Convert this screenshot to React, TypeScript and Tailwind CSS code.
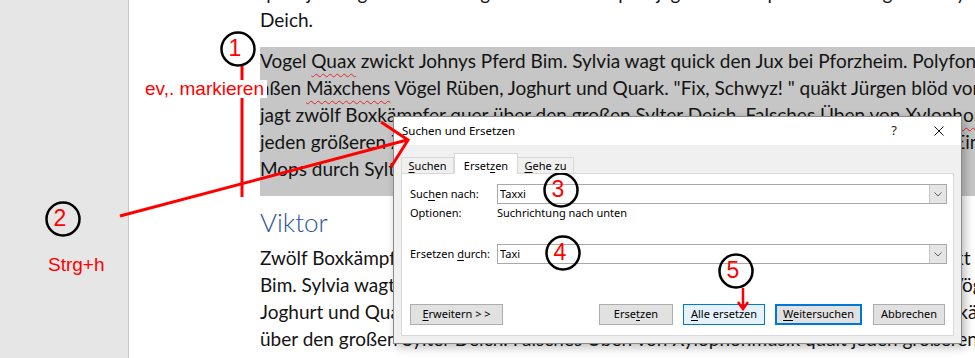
import React from 'react';

// Red spell-check squiggle under a word
function Sq({ children }: { children: React.ReactNode }) {
  return (
    <span className="underline decoration-wavy decoration-[#e3252b] decoration-1 underline-offset-[5px]">
      {children}
    </span>
  );
}

// Access key underline inside dialog labels
function K({ children }: { children: React.ReactNode }) {
  return <u className="underline-offset-[2px]">{children}</u>;
}

function Document() {
  return (
    <div className="flex-1 min-w-0 pl-[131px] -mt-[21px] font-['Lato','Open_Sans',sans-serif] text-[19px] leading-[27px] text-[#141414] whitespace-nowrap">
      <div>quält jeden größeren Zwerg. Zwölf Boxkämpfer jagen Viktor quer über den großen Sylter</div>
      <div>Deich.</div>

      {/* selected paragraph */}
      <div className="mt-[14px] bg-[#c6c6c6] pb-[14px]">
        <div>
          Vogel <Sq>Quax</Sq> zwickt Johnys Pferd Bim. Sylvia wagt quick den Jux bei Pforzheim. Polyfon zwitschernd
        </div>
        <div>
          aßen <Sq>Mäxchens</Sq> Vögel Rüben, Joghurt und Quark. "Fix, Schwyz! " quäkt Jürgen blöd vom Paß. Victor
        </div>
        <div>
          jagt zwölf Boxkämpfer quer über den großen Sylter Deich. Falsches Üben von <Sq>Xylophonmusik</Sq> quält
        </div>
        <div>jeden größeren Zwerg. Zwölf Boxkämpfer jagen quer über den großen Sylter Deich. Ein geübter</div>
        <div>Mops durch Sylt.</div>
      </div>

      <div className="mt-[10px] text-[26px] leading-[32px] text-[#2f5496] font-light">Viktor</div>

      <div className="mt-[6px]">
        <div>Zwölf Boxkämpfer jagen Viktor quer über den großen Sylter Deich. Vogel Quax zwickt Johnys Pferd</div>
        <div>Bim. Sylvia wagt quick den Jux bei Pforzheim. Polyfon zwitschernd aßen Mäxchens Vögel Rüben,</div>
        <div>Joghurt und Quark. "Fix, Schwyz! " quäkt Jürgen blöd vom Paß. Victor jagt zwölf Boxkämpfer quer</div>
        <div>über den großen Sylter Deich. Falsches Üben von Xylophonmusik quält jeden größeren Zwerg.</div>
        <div>
          Zwölf Boxkämpfer jagen Viktor quer über den <Sq>Sylterdeichweg</Sq> . Vogel Quax zwickt Johnys Pferd
        </div>
      </div>
    </div>
  );
}

function Combo({ value }: { value: string }) {
  return (
    <div className="flex-1 h-[20px] border border-[#a8a8a8] bg-white flex items-stretch">
      <span className="flex-1 pl-[2px] leading-[18px]">{value}</span>
      <div className="w-[17px] bg-[#e5e5e5] border-l border-[#c9c9c9] flex items-center justify-center">
        <svg width="8" height="5" viewBox="0 0 8 5">
          <polyline points="0.5,0.5 4,4 7.5,0.5" fill="none" stroke="#606060" strokeWidth="1" />
        </svg>
      </div>
    </div>
  );
}

function Dialog() {
  return (
    <div className="absolute left-[393px] top-[116px] w-[569px] h-[228px] border border-[#8a8a8a] bg-[#f0f0f0] shadow-[3px_3px_9px_rgba(0,0,0,0.28)] flex flex-col font-['Noto_Sans',sans-serif] text-[11px] text-black whitespace-nowrap">
      {/* title bar */}
      <div className="h-[28px] shrink-0 bg-white flex items-center pl-[8px] text-[11.5px]">
        <span>Suchen und Ersetzen</span>
        <span className="ml-auto text-[13px] text-[#222]">?</span>
        <svg className="ml-[37px] mr-[17px]" width="10" height="10" viewBox="0 0 10 10">
          <path d="M0.5 0.5 L9.5 9.5 M9.5 0.5 L0.5 9.5" stroke="#111" strokeWidth="1" />
        </svg>
      </div>

      <div className="flex-1 flex flex-col px-[7px] pt-[8px] pb-[7px]">
        {/* tabs */}
        <div className="relative z-10 flex items-end h-[20px]">
          <div className="w-[53px] h-[16px] leading-[16px] text-center border border-b-0 border-[#d9d9d9] bg-[#f0f0f0]">
            <K>S</K>uchen
          </div>
          <div className="w-[64px] h-[21px] -mb-px pt-[4px] leading-[16px] text-center border border-b-0 border-[#d9d9d9] bg-white">
            Erset<K>z</K>en
          </div>
          <div className="w-[56px] h-[16px] leading-[16px] text-center border border-b-0 border-l-0 border-[#d9d9d9] bg-[#f0f0f0]">
            <K>G</K>ehe zu
          </div>
        </div>

        {/* tab panel */}
        <div className="flex-1 bg-white border border-[#d9d9d9] pl-[8px] pr-[6px] pt-[10px] flex flex-col">
          <div className="flex items-center h-[20px]">
            <span className="w-[87px]">
              Suc<K>h</K>en nach:
            </span>
            <Combo value="Taxxi" />
          </div>
          <div className="flex items-center h-[16px] mt-[1px]">
            <span className="w-[87px]">Optionen:</span>
            <span>Suchrichtung nach unten</span>
          </div>
          <div className="flex items-center h-[20px] mt-[23px]">
            <span className="w-[87px]">
              Ersetzen <K>d</K>urch:
            </span>
            <Combo value="Taxi" />
          </div>

          <div className="flex h-[21px] mt-[40px] pr-[2px]">
            <div className="w-[93px] border border-[#adadad] bg-[#e1e1e1] flex items-center justify-center">
              <span>
                <K>E</K>rweitern &gt; &gt;
              </span>
            </div>
            <div className="ml-auto w-[74px] border border-[#adadad] bg-[#e1e1e1] flex items-center justify-center">
              <span>
                Erse<K>t</K>zen
              </span>
            </div>
            <div className="ml-[10px] w-[82px] border border-[#0078d7] bg-[#e5f1fb] flex items-center justify-center">
              <span>
                <K>A</K>lle ersetzen
              </span>
            </div>
            <div className="ml-[10px] w-[87px] border-2 border-[#0078d7] bg-[#e1e1e1] flex items-center justify-center">
              <span>
                <K>W</K>eitersuchen
              </span>
            </div>
            <div className="ml-[11px] w-[72px] border border-[#adadad] bg-[#e1e1e1] flex items-center justify-center">
              <span>Abbrechen</span>
            </div>
          </div>
        </div>
      </div>
    </div>
  );
}

// Numbered circle marker drawn over the screenshot
function Num({ n, x, y }: { n: string; x: number; y: number }) {
  return (
    <div
      className="absolute w-[34px] h-[34px] flex items-center justify-center font-['Liberation_Sans',Arial,sans-serif] text-[23px] leading-none text-[#ff0000]"
      style={{ left: x - 17, top: y - 17 }}
    >
      {n}
    </div>
  );
}

function Annotations() {
  const circles = [
    { n: '1', x: 238, y: 49 },
    { n: '2', x: 63, y: 219 },
    { n: '3', x: 561, y: 190 },
    { n: '4', x: 563, y: 253 },
    { n: '5', x: 736, y: 271 },
  ];
  return (
    <>
      <svg className="absolute inset-0 pointer-events-none" width="975" height="358" viewBox="0 0 975 358">
        <line x1="242" y1="66" x2="242" y2="197" stroke="#ff0000" strokeWidth="3" />
        <line x1="120" y1="216" x2="407" y2="140" stroke="#ff0000" strokeWidth="3" />
        <polyline points="381,122 408,140 391,167" fill="none" stroke="#ff0000" strokeWidth="3" />
        <line x1="743" y1="288" x2="743" y2="308" stroke="#ff0000" strokeWidth="2.5" />
        <polyline points="738,302 743,309 748,302" fill="none" stroke="#ff0000" strokeWidth="2.5" />
        {circles.map((c) => (
          <circle key={c.n} cx={c.x} cy={c.y} r="16.5" fill="none" stroke="#000" strokeWidth="2.5" />
        ))}
      </svg>
      {circles.map((c) => (
        <Num key={c.n} n={c.n} x={c.x - 3} y={c.y - 1} />
      ))}
      <span className="absolute left-[142px] top-[80px] pl-[3px] pr-[3px] bg-white font-['Liberation_Sans',Arial,sans-serif] text-[19px] leading-[18px] text-[#ff0000]">
        ev,. markieren
      </span>
      <span className="absolute left-[48px] top-[256px] font-['Liberation_Sans',Arial,sans-serif] text-[19px] leading-[18px] text-[#ff0000]">
        Strg+h
      </span>
    </>
  );
}

export default function App() {
  return (
    <div className="relative w-[975px] h-[358px] overflow-hidden bg-white flex">
      <div className="w-[129px] shrink-0 bg-[#e6e6e6] border-r border-[#c8c8c8]" />
      <Document />
      <Dialog />
      <Annotations />
    </div>
  );
}
